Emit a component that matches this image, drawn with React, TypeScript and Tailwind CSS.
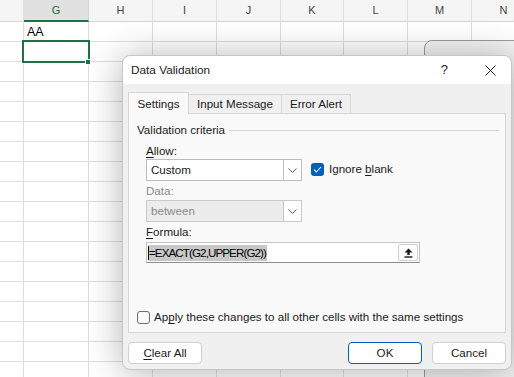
import React from 'react';

const COLS = [
  { label: '', w: 24 },
  { label: 'G', w: 65 },
  { label: 'H', w: 64 },
  { label: 'I', w: 64 },
  { label: 'J', w: 64 },
  { label: 'K', w: 63 },
  { label: 'L', w: 64 },
  { label: 'M', w: 64 },
  { label: 'N', w: 64 },
];

const ROWS = Array.from({ length: 18 }, (_, i) => i);

const Chevron = () => (
  <svg width="9" height="5" viewBox="0 0 9 5">
    <path d="M0.5 0.5 L4.5 4.5 L8.5 0.5" fill="none" stroke="#606060" strokeWidth="1" />
  </svg>
);

const Combo: React.FC<{ value: string; disabled?: boolean }> = ({ value, disabled }) => (
  <div
    className={`flex h-[22px] w-[156px] border ${
      disabled ? 'border-[#c9c9c9] bg-[#ececec] text-[#8a8a8a]' : 'border-[#bdbdbd] bg-white text-[#1a1a1a]'
    }`}
  >
    <div className="flex flex-1 items-center pl-[4px]">{value}</div>
    <div className="flex w-[18px] items-center justify-center border-l border-[#c4c4c4] bg-white">
      <Chevron />
    </div>
  </div>
);

const Sheet = () => (
  <div className="flex flex-col">
    <div className="flex h-[22px] bg-[#f5f5f5]">
      {COLS.map((c) => (
        <div
          key={c.label || 'f'}
          style={{ width: c.w }}
          className={`flex shrink-0 items-center justify-center border-r text-[11px] ${
            c.label === 'G'
              ? 'border-r-[#d4d4d4] border-b-2 border-b-[#1e7145] bg-[#e1e1e1] text-[#1e6b41]'
              : 'border-r-[#e0e0e0] border-b border-b-[#d4d4d4] text-[#444]'
          }`}
        >
          {c.label}
        </div>
      ))}
    </div>
    {ROWS.map((r) => (
      <div key={r} className="flex h-[20px]">
        {COLS.map((c) => (
          <div
            key={c.label || 'f'}
            style={{ width: c.w }}
            className="flex shrink-0 items-end border-r border-b border-[#dedede] pb-[1px] pl-[3px] text-[12.5px] leading-[15px] text-black"
          >
            {r === 0 && c.label === 'G' ? 'AA' : ''}
          </div>
        ))}
      </div>
    ))}
  </div>
);

export default function App() {
  return (
    <div
      className="relative h-[377px] w-[514px] overflow-hidden bg-white"
      style={{ fontFamily: '"Liberation Sans", Arial, sans-serif' }}
    >
      <Sheet />

      {/* selected cell G2 */}
      <div className="absolute left-[22px] top-[40px] h-[23px] w-[68px] border-2 border-[#1e7145]" />
      <div className="absolute left-[85px] top-[59px] h-[6px] w-[6px] border border-white bg-[#1e7145]" />

      {/* window behind */}
      <div className="absolute left-[424px] top-[40px] h-[400px] w-[200px] rounded-tl-[8px] border border-[#9a9a9a] bg-[#f3f3f3]" />

      {/* dialog */}
      <div className="absolute left-[122px] top-[55px] flex w-[390px] flex-col rounded-[8px] border border-[#c6c6c6] bg-[#f0f0f0] text-[11.6px] leading-[16px] text-[#1a1a1a] shadow-[0_2px_36px_rgba(0,0,0,0.3)]">
        <div className="flex h-[28px] items-center justify-between rounded-t-[8px] bg-white pl-[8px]">
          <span className="text-[11.8px]">Data Validation</span>
          <div className="flex items-center gap-[37px] pr-[15px]">
            <span className="text-[13px]">?</span>
            <svg width="11" height="11" viewBox="0 0 11 11">
              <path d="M0.5 0.5 L10.5 10.5 M10.5 0.5 L0.5 10.5" stroke="#1a1a1a" strokeWidth="1" />
            </svg>
          </div>
        </div>

        <div className="flex flex-col px-[5px] pt-[8px] pb-[5px]">
          <div className="flex h-[22px] items-end">
            <div className="relative z-10 flex h-[22px] w-[61px] items-center justify-center border border-b-0 border-[#d6d6d6] bg-[#f9f9f9]">
              Settings
            </div>
            <div className="flex h-[20px] w-[93px] items-center justify-center border border-l-0 border-[#d6d6d6] bg-[#f0f0f0]">
              Input Message
            </div>
            <div className="flex h-[20px] w-[69px] items-center justify-center border border-l-0 border-[#d6d6d6] bg-[#f0f0f0]">
              Error Alert
            </div>
          </div>

          <div className="mt-[-1px] flex h-[220px] flex-col border border-[#d6d6d6] bg-[#f9f9f9] pt-[8px] pb-[7px] pl-[8px] pr-[6px]">
            <div className="flex items-center gap-[4px]">
              <span>Validation criteria</span>
              <div className="h-px flex-1 bg-[#d8d8d8]" />
            </div>

            <div className="flex flex-col pl-[9px]">
              <div className="mt-[5px]">
                <span className="underline underline-offset-2">A</span>llow:
              </div>
              <div className="flex items-start gap-[9px]">
                <Combo value="Custom" />
                <div className="mt-[2px] flex h-[16px] items-center gap-[5px]">
                  <div className="flex h-[13px] w-[13px] items-center justify-center rounded-[3px] bg-[#005fb8]">
                    <svg width="9" height="7" viewBox="0 0 9 7">
                      <path d="M1 3.6 L3.4 6 L8 1" fill="none" stroke="white" strokeWidth="1.1" />
                    </svg>
                  </div>
                  <span>
                    Ignore <span className="underline underline-offset-2">b</span>lank
                  </span>
                </div>
              </div>

              <div className="mt-[2px] text-[#8c8c8c]">Data:</div>
              <div className="mt-[1px]">
                <Combo value="between" disabled />
              </div>

              <div className="mt-[2px]">
                <span className="underline underline-offset-2">F</span>ormula:
              </div>
              <div className="mt-[2px] flex h-[21px] w-[274px] items-center border border-[#c4c4c4] border-b-[#8e8e8e] bg-white pl-[1px] pr-[1px]">
                <div className="h-[14px] w-px bg-black" />
                <span className="bg-[#c8c8c8] pr-[1px] tracking-[-0.9px] text-black">=EXACT(G2,UPPER(G2))</span>
                <div className="flex-1" />
                <div className="flex h-[17px] w-[20px] items-center justify-center rounded-[2px] border border-[#cfcfcf] bg-white">
                  <svg width="9" height="10" viewBox="0 0 9 10">
                    <path d="M4.5 0.5 L8.5 4.5 L5.7 4.5 L5.7 7 L3.3 7 L3.3 4.5 L0.5 4.5 Z" fill="#1a1a1a" />
                    <rect x="0.5" y="8.3" width="8" height="1.4" fill="#1a1a1a" />
                  </svg>
                </div>
              </div>
            </div>

            <div className="mt-auto flex h-[16px] items-center gap-[4px]">
              <div className="h-[13px] w-[13px] rounded-[3px] border border-[#6e6e6e] bg-[#fbfbfb]" />
              <span>
                Ap<span className="underline underline-offset-2">p</span>ly these changes to all other cells with
                the same settings
              </span>
            </div>
          </div>

          <div className="mt-[9px] flex items-center">
            <button className="flex h-[22px] w-[74px] items-center justify-center rounded-[4px] border border-[#d0d0d0] bg-white">
              <span className="underline underline-offset-2">C</span>lear All
            </button>
            <div className="flex-1" />
            <button className="flex h-[22px] w-[74px] items-center justify-center rounded-[4px] border border-[#005fb8] bg-white">
              OK
            </button>
            <button className="ml-[10px] flex h-[22px] w-[74px] items-center justify-center rounded-[4px] border border-[#d0d0d0] bg-white">
              Cancel
            </button>
          </div>
        </div>
      </div>
    </div>
  );
}
